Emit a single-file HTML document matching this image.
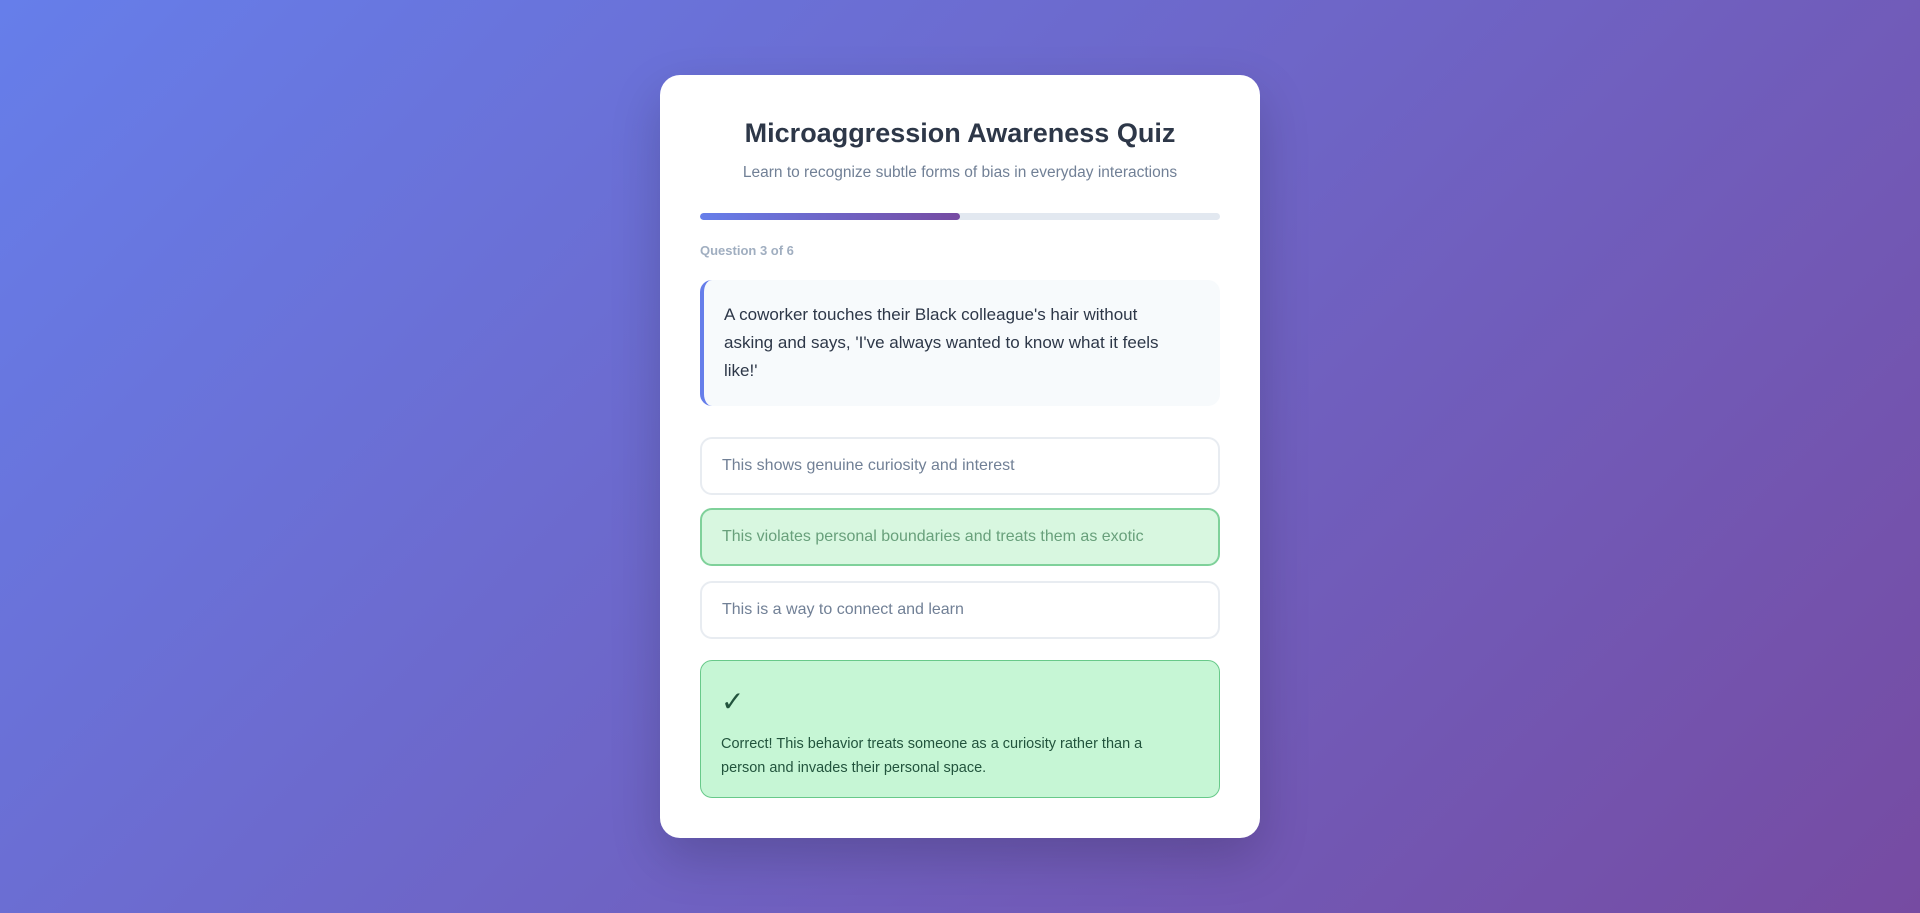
<!DOCTYPE html>
<html><head><meta charset="utf-8"><style>
*{box-sizing:border-box;margin:0;padding:0}
html,body{width:1920px;height:913px;overflow:hidden}
body{background:linear-gradient(135deg,#667eea 0%,#764ba2 100%);font-family:"Liberation Sans",sans-serif;position:relative}
.card{position:absolute;left:660px;top:75px;width:600px;height:763px;background:#fff;border-radius:20px;box-shadow:0 20px 50px rgba(0,0,0,.18);padding:0 40px}
h1{position:absolute;left:0;right:0;top:116px;text-align:center;font-size:27px;font-weight:bold;color:#2d3748;line-height:34px}
.sub{position:absolute;left:0;right:0;top:163px;text-align:center;font-size:15.5px;color:#718096;line-height:20px}
.abs{position:absolute;left:700px;width:520px}
.bar{top:213px;height:7px;background:#e2e8f0;border-radius:4px;overflow:hidden}
.bar div{width:50%;height:100%;background:linear-gradient(90deg,#667eea,#764ba2);border-radius:4px}
.ql{top:243px;font-size:13px;font-weight:bold;color:#a0aec0}
.q{top:280px;height:126px;background:#f7fafc;border-left:4px solid #667eea;border-radius:12px;padding:21px 20px;font-size:17px;line-height:28px;color:#2d3748;white-space:nowrap}
.opt{height:58px;border:2px solid #e8ecf1;border-radius:12px;padding:0 20px;font-size:16px;line-height:54px;color:#718096;background:#fff}
.opt.c{background:#d8f7e0;border-color:#7fd19a;color:#68a07b}
.fb{top:660px;height:138px;background:#c6f6d5;border:1px solid #68c98a;border-radius:12px;padding:20px;color:#22543d}
.fb .ck{font-size:28px;line-height:28px;margin-top:7px;height:28px}
.fb p{font-size:14.5px;line-height:24px;margin-top:16px;white-space:nowrap}
</style></head><body>
<div class="card"></div>
<div style="position:absolute;left:660px;width:600px;top:0">
<h1>Microaggression Awareness Quiz</h1>
<div class="sub">Learn to recognize subtle forms of bias in everyday interactions</div>
</div>
<div class="abs bar"><div></div></div>
<div class="abs ql">Question 3 of 6</div>
<div class="abs q">A coworker touches their Black colleague's hair without<br>asking and says, 'I've always wanted to know what it feels<br>like!'</div>
<div class="abs opt" style="top:437px">This shows genuine curiosity and interest</div>
<div class="abs opt c" style="top:508px">This violates personal boundaries and treats them as exotic</div>
<div class="abs opt" style="top:581px">This is a way to connect and learn</div>
<div class="abs fb"><div class="ck">✓</div><p>Correct! This behavior treats someone as a curiosity rather than a<br>person and invades their personal space.</p></div>
</body></html>
